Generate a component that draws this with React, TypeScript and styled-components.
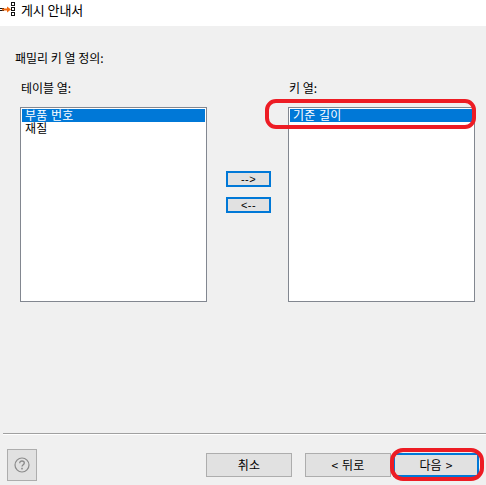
import React from "react";
import styled, { createGlobalStyle } from "styled-components";

const GlobalStyle = createGlobalStyle`
  html, body {
    margin: 0;
    padding: 0;
    background: #f0f0f0;
  }
  body {
    font-family: "Noto Sans CJK KR", "Liberation Sans", sans-serif;
    font-size: 12px;
    color: #000;
  }
`;

const Wizard = styled.div`
  width: 486px;
  height: 485px;
  display: flex;
  flex-direction: column;
  overflow: hidden;
`;

const TitleBar = styled.header`
  height: 26px;
  flex: none;
  background: #fff;
  display: flex;
  align-items: flex-start;
  gap: 6px;
  padding-top: 2px;
  box-sizing: border-box;
`;

const TitleText = styled.span`
  font-size: 13px;
  line-height: 15px;
  letter-spacing: -0.1px;
`;

const Content = styled.main`
  flex: 1;
  padding: 24px 11px 0 15px;
  display: flex;
  flex-direction: column;
`;

const Heading = styled.div`
  line-height: 16px;
  height: 16px;
`;

const Columns = styled.div`
  margin-top: 14px;
  padding-left: 5px;
  display: grid;
  grid-template-columns: 187px 81px 187px;
`;

const Column = styled.div`
  display: flex;
  flex-direction: column;
`;

const ColumnLabel = styled.div`
  height: 27px;
  line-height: 16px;
  padding-left: 1px;
`;

const ListWrap = styled.div`
  position: relative;
`;

const ListBox = styled.ul`
  margin: 0;
  padding: 1px;
  list-style: none;
  height: 195px;
  box-sizing: border-box;
  background: #fff;
  border: 1px solid #828790;
`;

const ListItem = styled.li<{ $selected?: boolean }>`
  height: ${(p) => (p.$selected ? 13 : 12)}px;
  line-height: 12px;
  padding-left: 3px;
  letter-spacing: 0.1px;
  word-spacing: 1px;
  background: ${(p) => (p.$selected ? "#0078d7" : "transparent")};
  color: ${(p) => (p.$selected ? "#fff" : "#000")};
`;

const MoveButtons = styled.div`
  display: flex;
  flex-direction: column;
  align-items: center;
  gap: 10px;
  padding: 91px 0 0 2px;
`;

const MoveButton = styled.button`
  width: 45px;
  height: 16px;
  padding: 0;
  box-sizing: border-box;
  background: #e1e1e1;
  border: 2px solid #0078d7;
  font-family: "Liberation Sans", sans-serif;
  font-size: 11px;
  line-height: 11px;
  letter-spacing: 0.4px;
  color: #000;
`;

const Footer = styled.footer`
  flex: none;
  height: 52px;
  box-sizing: border-box;
  margin-left: 3px;
  border-top: 1px solid #a0a0a0;
  box-shadow: inset 0 1px 0 #fff;
  padding: 15px 7px 0 4px;
  display: flex;
  align-items: flex-start;
`;

const HelpButton = styled.button`
  width: 30px;
  height: 32px;
  padding: 0;
  display: flex;
  align-items: center;
  justify-content: center;
  box-sizing: border-box;
  background: #e1e1e1;
  border: 1px solid #adadad;
  margin-right: auto;
`;

const ActionGroup = styled.div`
  display: flex;
  margin-top: 4px;
`;

const ActionButton = styled.button<{ $primary?: boolean; $gap?: number }>`
  width: 86px;
  height: 24px;
  padding: 0;
  margin-left: ${(p) => p.$gap ?? 0}px;
  box-sizing: border-box;
  background: #e1e1e1;
  border: ${(p) => (p.$primary ? "2px solid #0078d7" : "1px solid #adadad")};
  font-family: "Noto Sans CJK KR", "Liberation Sans", sans-serif;
  font-size: 12px;
  line-height: 14px;
  letter-spacing: 0.2px;
  word-spacing: 1px;
  color: #000;
`;

const ButtonWrap = styled.div`
  position: relative;
  display: flex;
  margin-left: 2px;
`;

const ListCallout = styled.div`
  position: absolute;
  left: -23px;
  right: -1px;
  top: -8px;
  height: 30px;
  box-sizing: border-box;
  border: 4px solid #ed1c24;
  border-radius: 11px;
  pointer-events: none;
`;

const ButtonCallout = styled.div`
  position: absolute;
  left: -3px;
  right: -5px;
  top: -5px;
  height: 33px;
  box-sizing: border-box;
  border: 4px solid #ed1c24;
  border-radius: 13px;
  pointer-events: none;
`;

const IconSvg = styled.svg`
  flex: none;
`;

const WizardIcon = () => (
  <IconSvg width="15" height="14" viewBox="0 0 15 14">
    <rect x="0" y="6" width="4" height="1" fill="#111" />
    <rect x="0" y="8" width="4" height="1" fill="#111" />
    <path d="M2 7.5h7" stroke="#f26a0f" strokeWidth="2" />
    <path d="M7 4.5l4 3-4 3z" fill="#f26a0f" />
    <rect x="11.5" y="0.5" width="3" height="3" fill="#fff" stroke="#111" />
    <rect x="11.5" y="5.5" width="3" height="3" fill="#fff" stroke="#111" />
    <rect x="11.5" y="10.5" width="3" height="3" fill="#fff" stroke="#111" />
  </IconSvg>
);

const HelpIcon = () => (
  <svg width="16" height="16" viewBox="0 0 16 16">
    <circle cx="8" cy="8" r="7" fill="none" stroke="#8a8a8a" strokeWidth="1.2" />
    <path
      d="M5.7 6.2c0-1.4 1-2.2 2.3-2.2s2.3.8 2.3 2c0 1.7-2.3 1.8-2.3 3.6"
      fill="none"
      stroke="#8a8a8a"
      strokeWidth="1.3"
    />
    <rect x="7.2" y="10.8" width="1.6" height="1.6" fill="#8a8a8a" />
  </svg>
);

export default function App() {
  return (
    <Wizard>
      <GlobalStyle />
      <TitleBar>
        <WizardIcon />
        <TitleText>게시 안내서</TitleText>
      </TitleBar>
      <Content>
        <Heading>패밀리 키 열 정의:</Heading>
        <Columns>
          <Column>
            <ColumnLabel>테이블 열:</ColumnLabel>
            <ListBox>
              <ListItem $selected>부품 번호</ListItem>
              <ListItem>재질</ListItem>
            </ListBox>
          </Column>
          <MoveButtons>
            <MoveButton>--&gt;</MoveButton>
            <MoveButton>&lt;--</MoveButton>
          </MoveButtons>
          <Column>
            <ColumnLabel>키 열:</ColumnLabel>
            <ListWrap>
              <ListBox>
                <ListItem $selected>기준 길이</ListItem>
              </ListBox>
              <ListCallout />
            </ListWrap>
          </Column>
        </Columns>
      </Content>
      <Footer>
        <HelpButton>
          <HelpIcon />
        </HelpButton>
        <ActionGroup>
          <ActionButton>취소</ActionButton>
          <ActionButton $gap={13}>&lt; 뒤로</ActionButton>
          <ButtonWrap>
            <ActionButton $primary>다음 &gt;</ActionButton>
            <ButtonCallout />
          </ButtonWrap>
        </ActionGroup>
      </Footer>
    </Wizard>
  );
}
